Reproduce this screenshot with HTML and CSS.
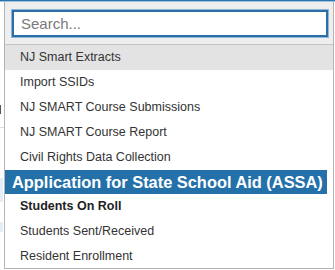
FILE: index.html
```html
<!DOCTYPE html>
<html>
<head>
	<title>Report Picker</title>
	<meta charset="UTF-8">
	<link rel="stylesheet" href="styles.css">
</head>
<body>
	<div id="Page">
		<div id="PickerButton"></div>
		<div class="peek mark"></div>
		<div class="peek rule"></div>
		<div class="peek tab"></div>
		<div class="peek tab second"></div>
	</div>

	<div id="Dropdown">
		<div id="SearchBox">
			<input type="text" placeholder="Search...">
		</div>
		<ul id="Options">
			<li class="option hover">NJ Smart Extracts</li>
			<li class="option">Import SSIDs</li>
			<li class="option">NJ SMART Course Submissions</li>
			<li class="option">NJ SMART Course Report</li>
			<li class="option">Civil Rights Data Collection</li>
			<li class="group">Application for State School Aid (ASSA)</li>
			<li class="option selected">Students On Roll</li>
			<li class="option">Students Sent/Received</li>
			<li class="option">Resident Enrollment</li>
		</ul>
	</div>
</body>
</html>
```

FILE: styles.css
```css
body {
	font-family: "Liberation Sans", Arial, sans-serif;
	margin: 0px;
	width: 335px;
	height: 270px;
	background-color: #ffffff;
	color: #333333;
	overflow: hidden;
}

#Page {
	position: relative;
	height: 270px;
}

#PickerButton {
	height: 1px;
	background-color: #2f72aa;
	border-bottom: 1px solid #9cc1df;
}

.peek {
	position: absolute;
	left: 0px;
}

.peek.mark {
	top: 105px;
	width: 1px;
	height: 9px;
	background-color: #555555;
}

.peek.rule {
	top: 127px;
	width: 4px;
	height: 1px;
	background-color: #dddddd;
}

.peek.tab {
	top: 178px;
	width: 3px;
	height: 24px;
	background-color: #e3eef8;
}

.peek.tab.second {
	top: 222px;
	height: 10px;
}

#Dropdown {
	position: absolute;
	left: 4px;
	top: 2px;
	width: 330px;
	height: 267px;
	box-sizing: border-box;
	border: 1px solid #b4b4b4;
	border-top: 0;
	background-color: #ffffff;
	overflow: hidden;
}

#SearchBox {
	background-color: #eeeeee;
	padding: 8px 5px 7px 7px;
	border-bottom: 1px solid #c4c4c4;
}

#SearchBox input {
	box-sizing: border-box;
	display: block;
	width: 316px;
	height: 27px;
	margin: 0;
	padding: 0 7px;
	border: 2px solid #2b6da6;
	box-shadow: 0 0 0 1px #8fb6d8;
	background-color: #ffffff;
	font-family: "Liberation Sans", Arial, sans-serif;
	font-size: 15px;
	color: #333333;
	outline: none;
}

#SearchBox input::placeholder {
	color: #7a7a7a;
}

#Options {
	list-style: none;
	margin: 0;
	padding: 0;
}

.option {
	height: 25px;
	line-height: 25px;
	padding-left: 15px;
	font-size: 12.5px;
	color: #333333;
	white-space: nowrap;
}

.option.hover {
	background-color: #e3e3e3;
}

.option.selected {
	font-weight: bold;
	color: #222222;
}

.group {
	height: 24px;
	line-height: 24px;
	margin-left: -1px;
	margin-right: 6px;
	padding-left: 8px;
	background-color: #2471aa;
	color: #ffffff;
	font-size: 16.4px;
	font-weight: bold;
	white-space: nowrap;
}
```
